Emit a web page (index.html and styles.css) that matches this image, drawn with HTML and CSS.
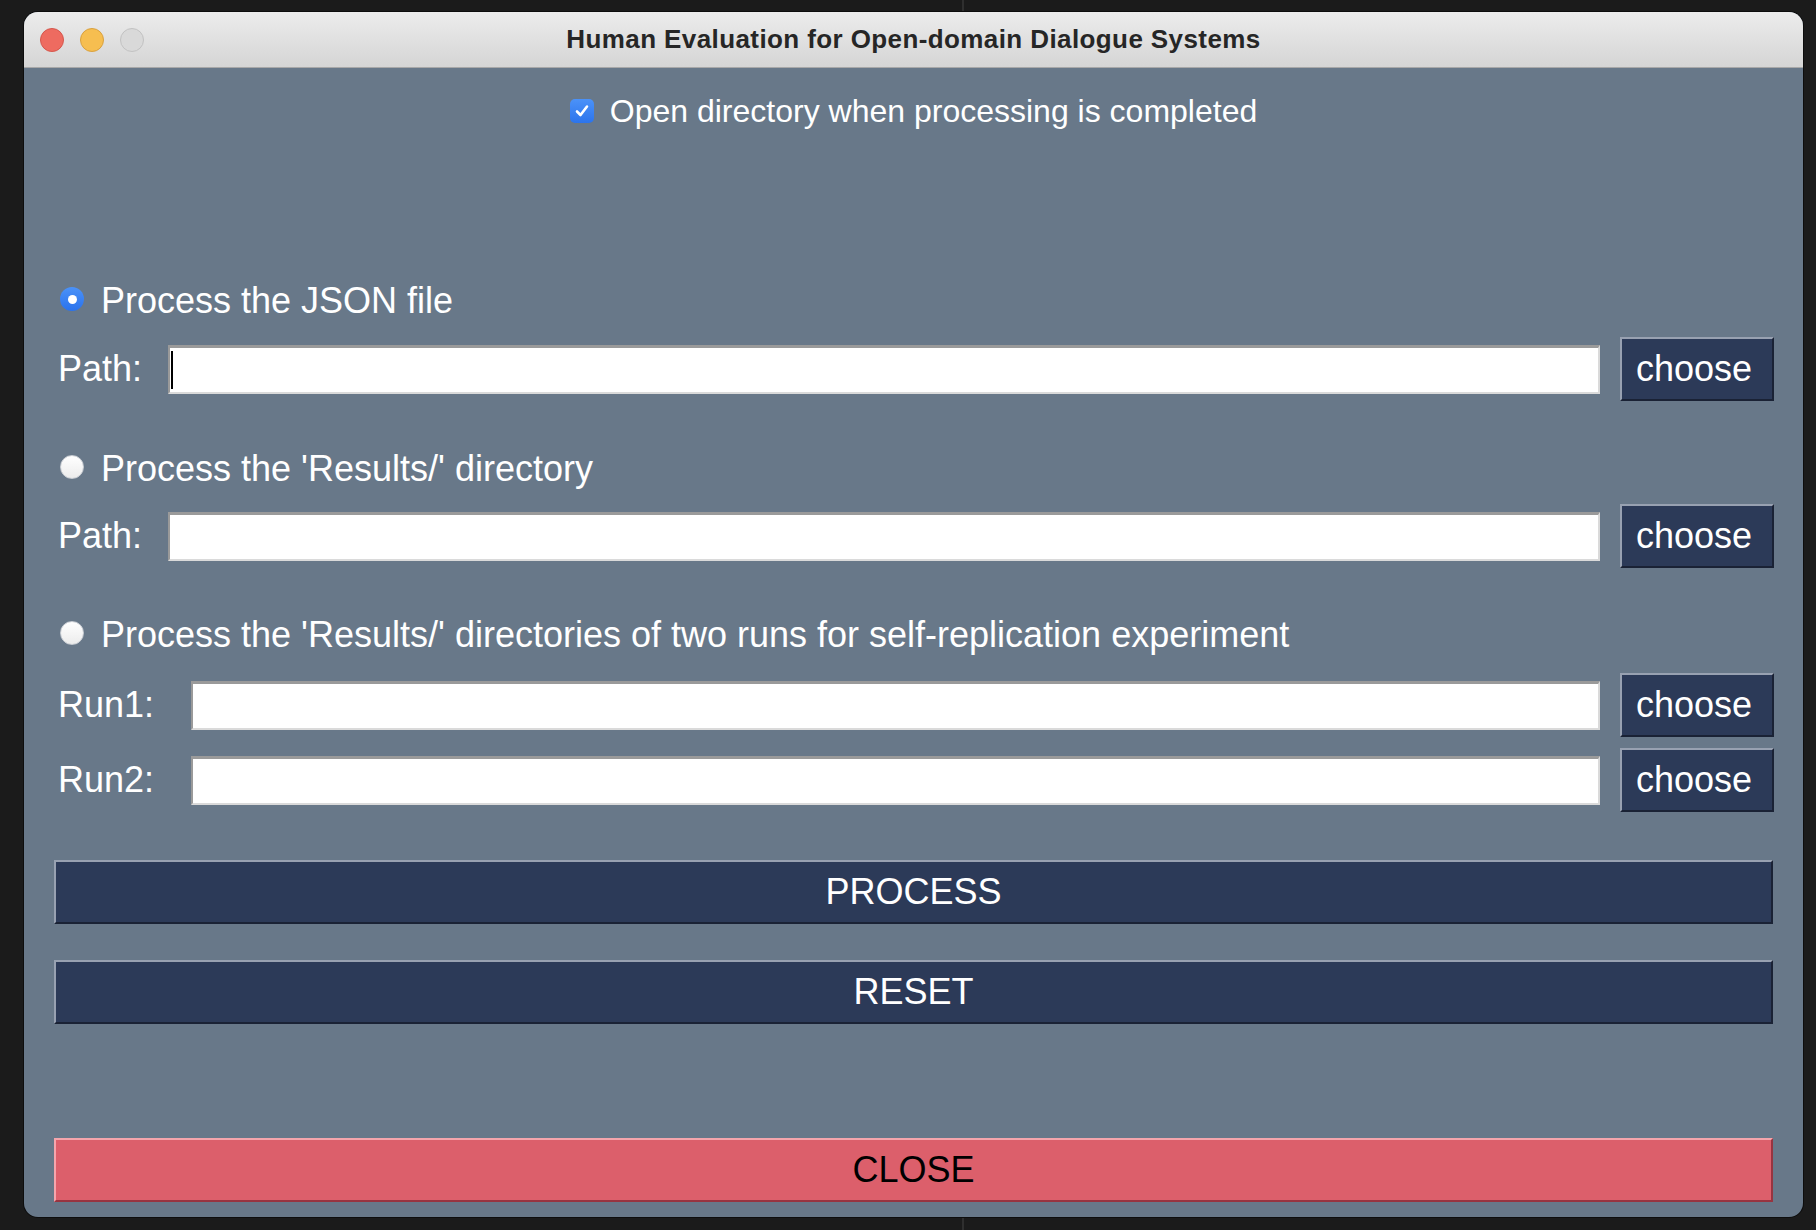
FILE: index.html
```html
<!DOCTYPE html>
<html>
<head>
<meta charset="utf-8">
<title>Human Evaluation for Open-domain Dialogue Systems</title>
<link rel="stylesheet" href="styles.css">
</head>
<body>
<div class="window">
  <div class="titlebar">
    <div class="lights">
      <span class="light red"></span>
      <span class="light yellow"></span>
      <span class="light gray"></span>
    </div>
    <div class="title">Human Evaluation for Open-domain Dialogue Systems</div>
  </div>
  <div class="content">
    <div class="check-row">
      <span class="checkbox">
        <svg width="16" height="16" viewBox="0 0 16 16"><path d="M3 8.5 L6.5 12 L13 3.5" fill="none" stroke="#fff" stroke-width="2.6" stroke-linecap="round" stroke-linejoin="round"/></svg>
      </span>
      <span class="check-label">Open directory when processing is completed</span>
    </div>

    <div class="radio-row r1">
      <span class="radio on"><span class="dot"></span></span>
      <span class="radio-label">Process the JSON file</span>
    </div>
    <div class="field-row f-near">
      <span class="lbl lbl-path">Path:</span>
      <div class="entry"><span class="caret"></span></div>
      <div class="btn choose">choose</div>
    </div>

    <div class="radio-row r2">
      <span class="radio"></span>
      <span class="radio-label">Process the 'Results/' directory</span>
    </div>
    <div class="field-row f-near2">
      <span class="lbl lbl-path">Path:</span>
      <div class="entry"></div>
      <div class="btn choose">choose</div>
    </div>

    <div class="radio-row r3">
      <span class="radio"></span>
      <span class="radio-label">Process the 'Results/' directories of two runs for self-replication experiment</span>
    </div>
    <div class="field-row f-run1">
      <span class="lbl lbl-run">Run1:</span>
      <div class="entry"></div>
      <div class="btn choose">choose</div>
    </div>
    <div class="field-row f-run2">
      <span class="lbl lbl-run">Run2:</span>
      <div class="entry"></div>
      <div class="btn choose">choose</div>
    </div>

    <div class="btn wide process">PROCESS</div>
    <div class="btn wide reset">RESET</div>
    <div class="btn wide close">CLOSE</div>
  </div>
</div>
</body>
</html>
```

FILE: styles.css
```css
html, body {
  margin: 0;
  padding: 0;
}
body {
  width: 1816px;
  height: 1230px;
  overflow: hidden;
  background: linear-gradient(to right, #1b1b1b 962px, #2f2f2f 962px, #2f2f2f 964px, #1b1b1b 964px);
  padding: 12px 0 0 24px;
  box-sizing: border-box;
  font-family: "Liberation Sans", Arial, Helvetica, sans-serif;
}
.window {
  width: 1779px;
  height: 1205px;
  border-radius: 14px;
  overflow: hidden;
  background: #687889;
  display: flex;
  flex-direction: column;
  box-shadow: 0 0 0 1px #0d0d0d;
}
.titlebar {
  height: 55px;
  flex: none;
  background: linear-gradient(#ececec, #d5d5d5);
  border-bottom: 1px solid #a8a8a8;
  display: flex;
  align-items: center;
  position: relative;
}
.lights {
  display: flex;
  gap: 16px;
  padding-left: 16px;
  position: absolute;
  left: 0;
  top: 16px;
}
.light {
  width: 24px;
  height: 24px;
  border-radius: 50%;
  box-sizing: border-box;
  display: block;
}
.light.red { background: #ee6b60; border: 1px solid #d5574d; }
.light.yellow { background: #f6be50; border: 1px solid #d9a13f; }
.light.gray { background: #d9d9d9; border: 1px solid #c2c2c2; }
.title {
  flex: 1;
  text-align: center;
  font-weight: bold;
  font-size: 26px;
  letter-spacing: 0.4px;
  color: #262626;
  padding-bottom: 1px;
}
.content {
  flex: 1;
  padding: 0 30px;
  display: flex;
  flex-direction: column;
  color: #ffffff;
}
.check-row {
  margin-top: 23px;
  height: 40px;
  display: flex;
  align-items: center;
  justify-content: center;
  gap: 16px;
}
.checkbox {
  width: 24px;
  height: 24px;
  border-radius: 5px;
  background: linear-gradient(#4b92f8, #2c74ec);
  display: flex;
  align-items: center;
  justify-content: center;
}
.check-label {
  font-size: 32px;
}
.radio-row {
  height: 40px;
  display: flex;
  align-items: center;
  padding-left: 6px;
  gap: 17px;
}
.r1 { margin-top: 148px; }
.r2 { margin-top: 46px; }
.r3 { margin-top: 45px; }
.radio {
  width: 24px;
  height: 24px;
  border-radius: 50%;
  box-sizing: border-box;
  background: linear-gradient(#ffffff, #ececec);
  border: 1px solid #c9cdd3;
  display: flex;
  align-items: center;
  justify-content: center;
}
.radio.on {
  background: linear-gradient(#4b92f8, #2a72ec);
  border: none;
}
.radio .dot {
  width: 9px;
  height: 9px;
  border-radius: 50%;
  background: #ffffff;
}
.radio-label {
  font-size: 36px;
  padding-top: 3px;
}
.field-row {
  height: 64px;
  display: flex;
  align-items: center;
}
.f-near { margin-top: 18px; }
.f-near2 { margin-top: 17px; }
.f-run1 { margin-top: 20px; }
.f-run2 { margin-top: 11px; }
.lbl {
  font-size: 36px;
  padding-left: 4px;
  box-sizing: border-box;
  flex: none;
}
.lbl-path { width: 114px; }
.lbl-run { width: 137px; }
.entry {
  flex: 1;
  height: 49px;
  box-sizing: border-box;
  background: #ffffff;
  border-top: 3px solid #9a9a9a;
  border-left: 2px solid #9a9a9a;
  border-right: 2px solid #dadada;
  border-bottom: 2px solid #dadada;
  margin-right: 20px;
  display: flex;
  align-items: center;
  padding-left: 1px;
}
.caret {
  width: 2px;
  height: 38px;
  background: #000;
}
.btn {
  box-sizing: border-box;
  background: #2c3a58;
  color: #ffffff;
  font-size: 36px;
  border-top: 2px solid #98a1b1;
  border-left: 2px solid #98a1b1;
  border-right: 2px solid #1a2235;
  border-bottom: 2px solid #1a2235;
  display: flex;
  align-items: center;
  justify-content: center;
}
.choose {
  width: 154px;
  height: 64px;
  flex: none;
  padding-right: 6px;
  margin-right: -1px;
}
.wide {
  height: 64px;
}
.process { margin-top: 48px; }
.reset { margin-top: 36px; }
.close {
  margin-top: 114px;
  background: #dc5f6b;
  color: #000000;
  border-top-color: #f5a5ac;
  border-left-color: #f5a5ac;
  border-right-color: #983440;
  border-bottom-color: #983440;
}
```
